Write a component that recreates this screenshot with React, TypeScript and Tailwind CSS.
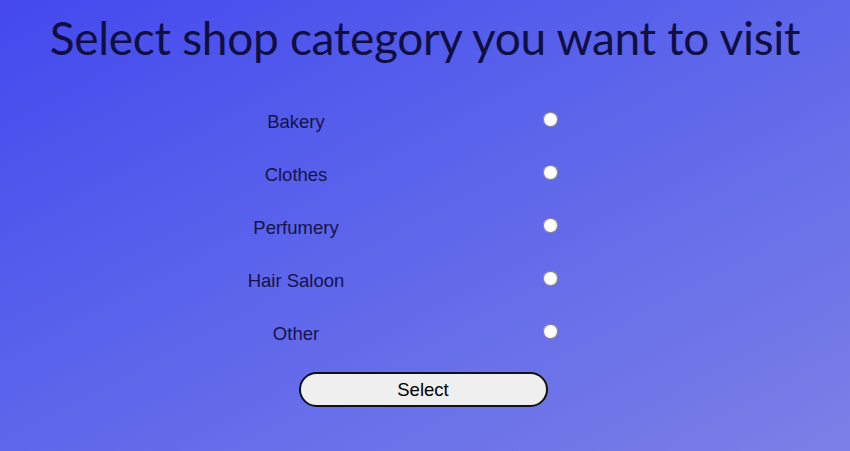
export default function App() {
  const categories = ["Bakery", "Clothes", "Perfumery", "Hair Saloon", "Other"]

  return (
    <div className="min-h-[451px] w-full bg-gradient-to-br from-[#4448ee] to-[#7c7fe6] flex flex-col items-center">
      <h1 className="mt-[10px] text-[46px] leading-[56px] text-[#100f42] font-['Lato',sans-serif] tracking-[-0.3px]">
        Select shop category you want to visit
      </h1>

      <form className="mt-[45px] flex flex-col items-center" onSubmit={(e) => e.preventDefault()}>
        <div className="grid grid-cols-[200px_254px] gap-y-[32px] mr-[4px]">
          {categories.map((c) => (
            <div key={c} className="contents">
              <label
                htmlFor={c}
                className="h-[21px] flex items-center justify-center text-[18.5px] text-[#15134a] font-['Liberation_Sans',Arial,sans-serif]"
              >
                {c}
              </label>
              <div className="h-[21px] flex items-start">
                <input id={c} type="radio" name="category" className="m-0 ml-[147px] mt-[1px] w-[15px] h-[15px]" />
              </div>
            </div>
          ))}
        </div>

        <button
          type="submit"
          className="mt-[28px] mr-[4px] w-[249px] h-[35px] rounded-full border-2 border-[#111] bg-[#efefef] text-[18.5px] text-black font-['Liberation_Sans',Arial,sans-serif]"
        >
          Select
        </button>
      </form>
    </div>
  )
}
